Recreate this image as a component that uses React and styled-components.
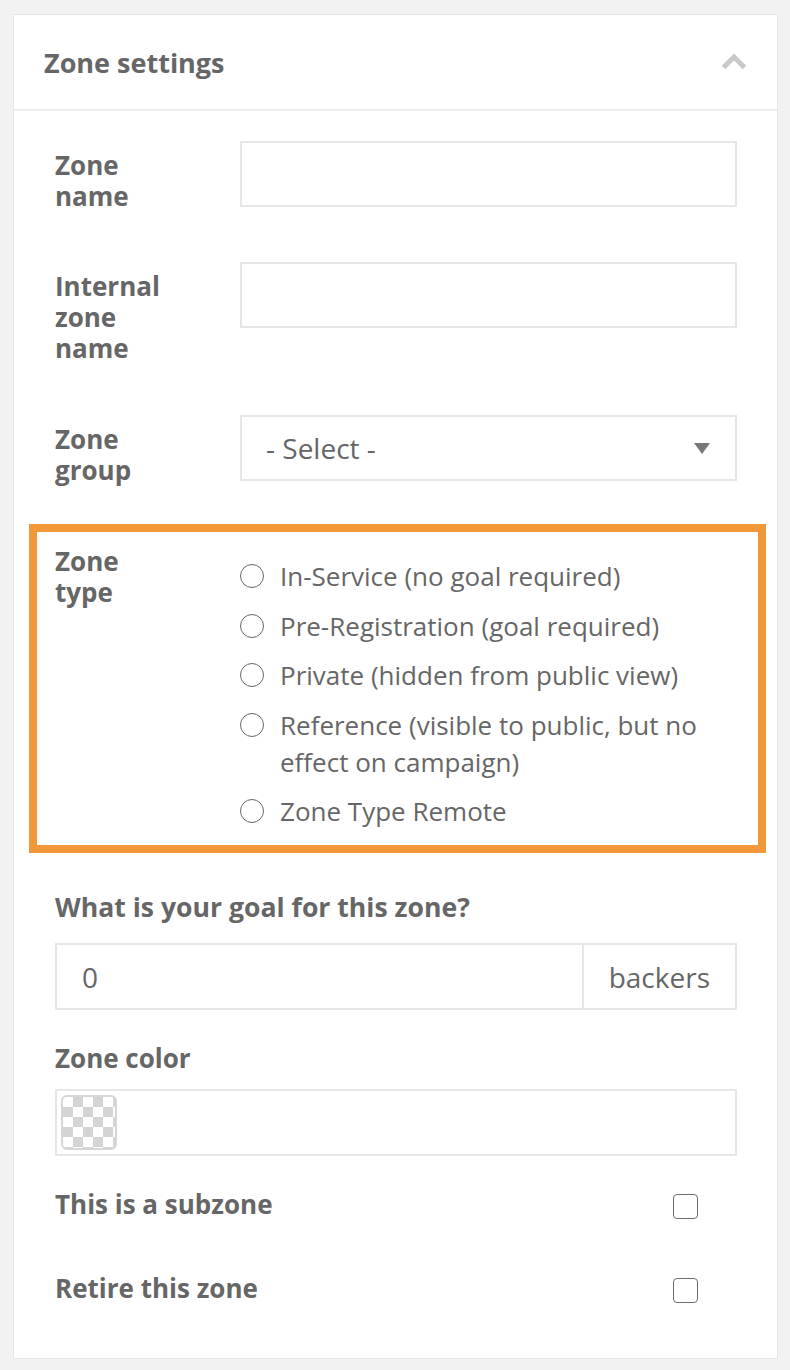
import styled, { createGlobalStyle } from "styled-components";

const GlobalStyle = createGlobalStyle`
    body {
        margin: 0;
        background: #f2f2f2;
        font-family: "Open Sans", "Liberation Sans", sans-serif;
        color: #666;
    }
`;

const Page = styled.div`
    padding: 14px 12px 13px 13px;
`;

const Card = styled.div`
    background: #fff;
    border: 1px solid #e6e6e6;
`;

const Header = styled.div`
    display: flex;
    align-items: center;
    justify-content: space-between;
    height: 94px;
    padding: 0 30px 0 30px;
    border-bottom: 2px solid #ebebeb;
`;

const Title = styled.h2`
    margin: 0;
    font-size: 27px;
    font-weight: 700;
    color: #666;
`;

const Body = styled.div`
    padding: 30px 40px 54px 41px;
`;

const Row = styled.div`
    display: grid;
    grid-template-columns: 185px 1fr;
    margin-bottom: ${(p) => p.gap || 50}px;
`;

const Label = styled.div`
    font-size: ${(p) => p.size || 26}px;
    font-weight: 700;
    line-height: 31px;
    padding-top: ${(p) => p.top || 0}px;
    margin-bottom: ${(p) => p.below || 0}px;
`;

const TextInput = styled.div`
    height: 62px;
    border: 2px solid #e6e6e6;
    display: flex;
    align-items: center;
    padding: 0 24px;
    font-size: 28px;
`;

const SelectBox = styled(TextInput)`
    justify-content: space-between;
    padding-right: 25px;
`;

const Highlight = styled.div`
    display: grid;
    grid-template-columns: 185px 1fr;
    margin: 0 -29px 39px -26px;
    padding: 14px 18px 15px 18px;
    border: 8px solid #f0983a;
`;

const RadioList = styled.div`
    display: flex;
    flex-direction: column;
    gap: 12.5px;
    padding-top: 12px;
`;

const RadioItem = styled.label`
    display: flex;
    align-items: flex-start;
    gap: 16px;
    font-size: 26px;
    line-height: 37px;
`;

const RadioCircle = styled.span`
    flex: none;
    width: 22px;
    height: 22px;
    margin-top: 6px;
    border: 1.5px solid #666;
    border-radius: 50%;
`;

const InputGroup = styled.div`
    display: flex;
    height: 63px;
    border: 2px solid #e6e6e6;
    margin-bottom: 33px;
    font-size: 28px;
`;

const GroupField = styled.div`
    flex: 1;
    display: flex;
    align-items: center;
    padding-left: 25px;
`;

const Addon = styled.div`
    display: flex;
    align-items: center;
    padding: 0 25px 0 25px;
    border-left: 2px solid #e6e6e6;
`;

const ColorInput = styled.div`
    box-sizing: border-box;
    height: 67px;
    border: 2px solid #e6e6e6;
    padding: 4px;
    margin-bottom: 33px;
`;

const Swatch = styled.div`
    box-sizing: border-box;
    width: 56px;
    height: 55px;
    border: 2px solid #d6d6d6;
    border-radius: 6px;
    background-color: #fff;
    background-image:
        linear-gradient(45deg, #d4d4d4 25%, transparent 25%, transparent 75%, #d4d4d4 75%),
        linear-gradient(45deg, #d4d4d4 25%, transparent 25%, transparent 75%, #d4d4d4 75%);
    background-size: 20px 20px;
    background-position: 0 0, 10px 10px;
`;

const CheckRow = styled.div`
    display: flex;
    align-items: center;
    justify-content: space-between;
    padding-right: 39px;
    margin-bottom: ${(p) => p.gap || 0}px;
`;

const CheckBox = styled.span`
    width: 23px;
    height: 23px;
    border: 1.5px solid #6e6e6e;
    border-radius: 4px;
    margin-top: 3px;
`;

const zoneTypes = [
    "In-Service (no goal required)",
    "Pre-Registration (goal required)",
    "Private (hidden from public view)",
    "Reference (visible to public, but no effect on campaign)",
    "Zone Type Remote",
];

const App = () => {
    return (
        <>
            <GlobalStyle />
            <Page>
                <Card>
                    <Header>
                        <Title>Zone settings</Title>
                        <svg width="26" height="20" viewBox="0 0 26 20">
                            <path d="M2.5 15.5 L13 5 L23.5 15.5" fill="none" stroke="#c9c9c9" strokeWidth="5" />
                        </svg>
                    </Header>
                    <Body>
                        <Row>
                            <Label top={9}>Zone<br />name</Label>
                            <TextInput />
                        </Row>
                        <Row gap={51}>
                            <Label top={9}>Internal<br />zone<br />name</Label>
                            <TextInput />
                        </Row>
                        <Row gap={38}>
                            <Label top={9}>Zone<br />group</Label>
                            <SelectBox>
                                <span>- Select -</span>
                                <svg width="16" height="11" viewBox="0 0 16 11">
                                    <path d="M0 0 H16 L8 11 Z" fill="#777" />
                                </svg>
                            </SelectBox>
                        </Row>
                        <Highlight>
                            <Label>Zone<br />type</Label>
                            <RadioList>
                                {zoneTypes.map((t) => (
                                    <RadioItem key={t}>
                                        <RadioCircle />
                                        <span>{t}</span>
                                    </RadioItem>
                                ))}
                            </RadioList>
                        </Highlight>
                        <Label size={26.6} below={20}>What is your goal for this zone?</Label>
                        <InputGroup>
                            <GroupField>0</GroupField>
                            <Addon>backers</Addon>
                        </InputGroup>
                        <Label below={15}>Zone color</Label>
                        <ColorInput>
                            <Swatch />
                        </ColorInput>
                        <CheckRow gap={53}>
                            <Label>This is a subzone</Label>
                            <CheckBox />
                        </CheckRow>
                        <CheckRow>
                            <Label>Retire this zone</Label>
                            <CheckBox />
                        </CheckRow>
                    </Body>
                </Card>
            </Page>
        </>
    );
};
export default App;
